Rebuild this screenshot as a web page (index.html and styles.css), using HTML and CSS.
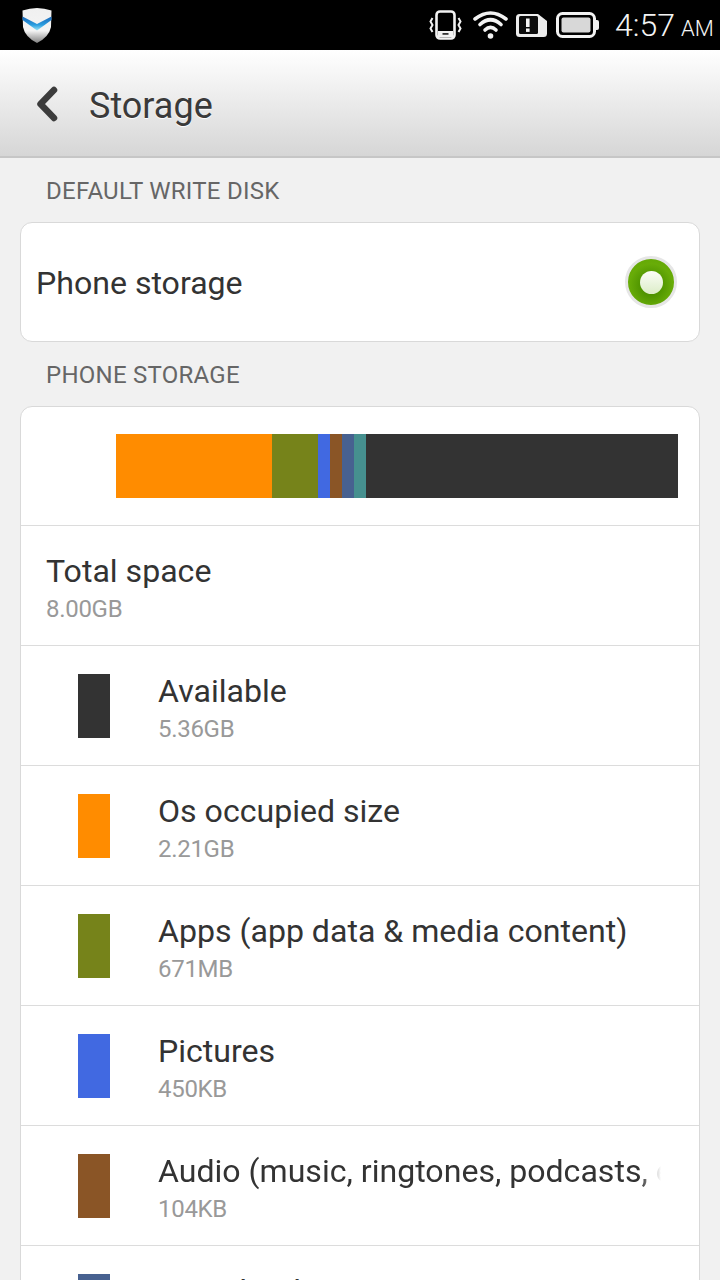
FILE: index.html
```html
<!DOCTYPE html>
<html lang="en">
<head>
<meta charset="utf-8">
<title>Storage</title>
<link rel="stylesheet" href="styles.css">
</head>
<body>
<div class="screen">
  <div class="status">
    <svg class="shield" width="30" height="36" viewBox="0 0 30 36">
      <defs>
        <linearGradient id="sh" x1="0" y1="0" x2="0" y2="1"><stop offset="0" stop-color="#f0f0f0"/><stop offset=".65" stop-color="#f4f4f4"/><stop offset="1" stop-color="#808080"/></linearGradient>
        <linearGradient id="bl" x1="0" y1="0" x2="0" y2="1"><stop offset="0" stop-color="#1a66b8"/><stop offset=".6" stop-color="#2a9ee0"/><stop offset="1" stop-color="#9fe6f6"/></linearGradient>
      </defs>
      <path d="M0.500 3.500 Q15 -1.500 29.500 3.500 L29 20 Q27 30 15 36 Q3 30 1 20 Z" fill="url(#sh)"/>
      <path d="M0.500 9.500 L15 17 L29.500 9.500 L29.500 13 L15 23.500 L0.500 13 Z" fill="url(#bl)"/>
    </svg>
    <svg class="ic-vib" width="33" height="30" viewBox="0 0 33 30" fill="none" stroke="#f2f2f2">
      <rect x="7.500" y="1.500" width="18" height="27" rx="3.500" stroke-width="2.600"/>
      <rect x="9" y="21" width="15" height="6" fill="#f2f2f2" stroke="none"/>
      <rect x="13.500" y="23" width="6" height="1.800" fill="#333" stroke="none"/>
      <path d="M3.500 8 L1.500 11.500 L3.500 15 L1.500 18.500 L3.500 22 M29.500 8 L31.500 11.500 L29.500 15 L31.500 18.500 L29.500 22" stroke-width="2"/>
    </svg>
    <svg class="ic-wifi" width="35" height="29" viewBox="0 0 35 29" fill="none" stroke="#f2f2f2" stroke-width="3.600" stroke-linecap="round">
      <path d="M2 9 Q17.500 -3 33 9"/>
      <path d="M7 14.500 Q17.500 5 28 14.500"/>
      <path d="M12 20 Q17.500 14.500 23 20"/>
      <circle cx="17.500" cy="26" r="2.800" fill="#f2f2f2" stroke="none"/>
    </svg>
    <svg class="ic-sim" width="33" height="25" viewBox="0 0 33 25" fill="none">
      <path d="M4.500 1 H23 L32 8 V20.500 Q32 24 28.500 24 H4.500 Q1 24 1 20.500 V4.500 Q1 1 4.500 1 Z" fill="#ececec"/>
      <rect x="4" y="3" width="19" height="18" rx="1.500" fill="#0c0c0c"/>
      <rect x="11" y="5.500" width="3.600" height="8.500" fill="#f6f6f6"/>
      <rect x="11" y="15.500" width="3.600" height="3.400" fill="#f6f6f6"/>
    </svg>
    <svg class="ic-batt" width="43" height="26" viewBox="0 0 43 26">
      <rect x="1.500" y="1.500" width="37" height="23" rx="5" fill="none" stroke="#f2f2f2" stroke-width="3"/>
      <rect x="5.500" y="5.500" width="29" height="15" rx="2" fill="#d8d8d8"/>
      <path d="M40 8 H41 Q43 8 43 10 V16 Q43 18 41 18 H40 Z" fill="#f2f2f2"/>
    </svg>
    <div class="clock">4:57<span class="ampm">AM</span></div>
  </div>

  <div class="header">
    <svg class="back" width="22" height="36" viewBox="0 0 22 36" fill="none" stroke="#3c3c3c" stroke-width="6.500" stroke-linecap="round" stroke-linejoin="round">
      <path d="M18 4 L4.500 18 L18 32"/>
    </svg>
    <div class="title">Storage</div>
  </div>

  <div class="section">DEFAULT WRITE DISK</div>
  <div class="card">
    <div class="row-disk">
      <div class="disk-name">Phone storage</div>
      <div class="radio"><div class="radio-dot"></div></div>
    </div>
  </div>

  <div class="section">PHONE STORAGE</div>
  <div class="card">
    <div class="row row-bar">
      <div class="bar">
        <div class="seg s-os"></div>
        <div class="seg s-apps"></div>
        <div class="seg s-pic"></div>
        <div class="seg s-audio"></div>
        <div class="seg s-dl"></div>
        <div class="seg s-misc"></div>
        <div class="seg s-free"></div>
      </div>
    </div>
    <div class="row row-total">
      <div class="name">Total space</div>
      <div class="size">8.00GB</div>
    </div>
    <div class="row row-item">
      <div class="swatch c-free"></div>
      <div class="text"><div class="name">Available</div><div class="size">5.36GB</div></div>
    </div>
    <div class="row row-item">
      <div class="swatch c-os"></div>
      <div class="text"><div class="name">Os occupied size</div><div class="size">2.21GB</div></div>
    </div>
    <div class="row row-item">
      <div class="swatch c-apps"></div>
      <div class="text"><div class="name">Apps (app data &amp; media content)</div><div class="size">671MB</div></div>
    </div>
    <div class="row row-item">
      <div class="swatch c-pic"></div>
      <div class="text"><div class="name">Pictures</div><div class="size">450KB</div></div>
    </div>
    <div class="row row-item">
      <div class="swatch c-audio"></div>
      <div class="text"><div class="name fade">Audio (music, ringtones, podcasts, etc.)</div><div class="size">104KB</div></div>
    </div>
    <div class="row row-item">
      <div class="swatch c-dl"></div>
      <div class="text"><div class="name">Downloads</div><div class="size">58KB</div></div>
    </div>
  </div>
</div>
</body>
</html>
```

FILE: styles.css
```css
* { box-sizing: border-box; }
html, body { margin: 0; padding: 0; height: 1280px; overflow: hidden; }
body { font-family: Roboto, "Liberation Sans", sans-serif; background: #f1f1f1; color: #333; }
.screen { width: 720px; height: 1280px; overflow: hidden; display: flex; flex-direction: column; }

.status { flex: none; height: 50px; background: #000; display: flex; align-items: flex-start; padding: 0 0 0 22px; }
.shield { margin-top: 7px; margin-right: 377px; }
.ic-vib { margin-top: 10px; margin-right: 11px; }
.ic-wifi { margin-top: 10px; margin-right: 7px; }
.ic-sim { margin-top: 13px; margin-right: 8px; }
.ic-batt { margin-top: 12px; margin-right: 16px; }
.clock { color: #f4f4f4; font-size: 32px; line-height: 50px; font-weight: 300; width: 105px; white-space: nowrap; }
.ampm { font-size: 22px; margin-left: 6px; font-weight: 300; }

.header { flex: none; height: 108px; background: linear-gradient(#fff, #d6d6d6); border-bottom: 2px solid #c6c6c6; display: flex; align-items: center; padding: 0 0 0 36px; }
.back { margin-right: 31px; margin-top: 2px; }
.title { font-size: 36px; color: #3a3a3a; text-shadow: 0 1px 1px #fff; margin-top: 5px; }

.section { flex: none; height: 64px; padding: 19px 0 0 46px; font-size: 24px; letter-spacing: .25px; line-height: 28px; color: #666; }

.card { flex: none; margin: 0 20px; background: #fff; border: 1px solid #d9d9d9; border-radius: 12px; }

.row-disk { height: 118px; display: flex; align-items: center; justify-content: space-between; padding: 0 22px 0 15px; }
.disk-name { font-size: 32.100px; color: #333; margin-top: 2px; }
.radio { width: 52px; height: 52px; border-radius: 50%; background: radial-gradient(circle at 50% 58%, #3f8300 0, #4f9400 28%, #68ac08 62%, #5fa502 100%); border: 3px solid #e6e6e6; display: flex; align-items: center; justify-content: center; }
.radio-dot { width: 23px; height: 23px; border-radius: 50%; background: linear-gradient(#fbfdf7, #dcedc8); }

.row { border-top: 1px solid #dcdcdc; height: 120px; }
.row:first-child { border-top: 0; }
.row-bar { height: 118px; padding: 27px 21px 0 95px; }
.bar { display: flex; height: 64px; }
.seg { height: 64px; }
.s-os { width: 156px; background: #ff8c00; }
.s-apps { width: 46px; background: #76831a; }
.s-pic { width: 12px; background: #4169e1; }
.s-audio { width: 12px; background: #8a5526; }
.s-dl { width: 12px; background: #476190; }
.s-misc { width: 12px; background: #46908f; }
.s-free { flex: 1; background: #333; }

.name { font-size: 32.100px; line-height: 40px; color: #333; white-space: nowrap; }
.size { font-size: 24px; letter-spacing: -.3px; line-height: 30px; color: #999; margin-top: 3px; }

.row-total { padding: 25px 0 0 25px; }
.row-item { display: flex; align-items: flex-start; padding: 28px 0 0 57px; }
.text { margin: -3px 0 0 48px; width: 503px; overflow: hidden; }
.fade { -webkit-mask-image: linear-gradient(to right, #000 482px, transparent 503px); mask-image: linear-gradient(to right, #000 482px, transparent 503px); }
.swatch { flex: none; width: 32px; height: 64px; }
.c-free { background: #333; }
.c-os { background: #ff8c00; }
.c-apps { background: #76831a; }
.c-pic { background: #4169e1; }
.c-audio { background: #8a5526; }
.c-dl { background: #476190; }
```
